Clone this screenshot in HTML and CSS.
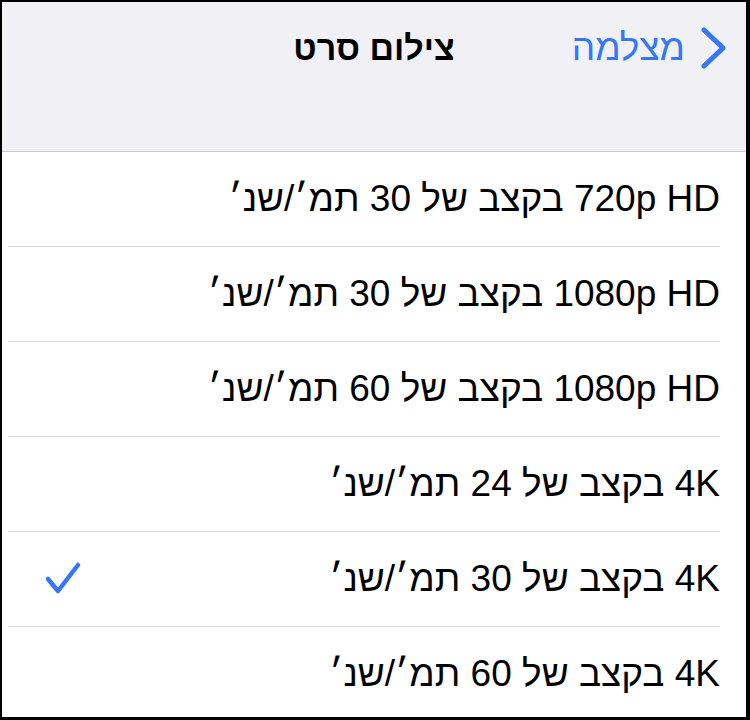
FILE: index.html
```html
<!DOCTYPE html>
<html lang="he" dir="rtl">
<head>
    <meta charset="UTF-8">
    <meta name="viewport" content="width=device-width, initial-scale=1.0">
    <title>צילום סרט</title>
    <link rel="stylesheet" href="styles.css">
</head>
<body>
    <div class="screen">
        <div class="nav-bar">
            <div class="nav-row">
                <a class="back-btn" href="#">
                    <svg class="chevron" viewBox="0 0 30 44" width="30" height="44">
                        <path d="M5 4 L24 22 L5 40" fill="none" stroke="#3478f6" stroke-width="5" stroke-linecap="round" stroke-linejoin="round"/>
                    </svg>
                    <span>מצלמה</span>
                </a>
                <h1 class="nav-title">צילום סרט</h1>
                <div></div>
            </div>
        </div>

        <ul class="options">
            <li class="option"><span>720p HD בקצב של 30 תמ׳/שנ׳</span></li>
            <li class="option"><span>1080p HD בקצב של 30 תמ׳/שנ׳</span></li>
            <li class="option"><span>1080p HD בקצב של 60 תמ׳/שנ׳</span></li>
            <li class="option"><span>4K בקצב של 24 תמ׳/שנ׳</span></li>
            <li class="option selected">
                <span>4K בקצב של 30 תמ׳/שנ׳</span>
                <svg class="check" viewBox="0 0 38 36" width="38" height="36">
                    <path d="M4 18 L14 30 L34 4" fill="none" stroke="#3478f6" stroke-width="4.5" stroke-linecap="round" stroke-linejoin="round"/>
                </svg>
            </li>
            <li class="option"><span>4K בקצב של 60 תמ׳/שנ׳</span></li>
        </ul>
    </div>
</body>
</html>
```

FILE: styles.css
```css
* {
    margin: 0;
    padding: 0;
    box-sizing: border-box;
}

body {
    font-family: 'Liberation Sans', Arial, sans-serif;
    background: #000;
}

.screen {
    width: 750px;
    height: 720px;
    border-style: solid;
    border-color: #000;
    border-width: 2px 4px 3px 2px;
    background: #fff;
    overflow: hidden;
}

.nav-bar {
    height: 150px;
    background: #f0f0f5;
    border-bottom: 1px solid #c9c9ce;
}

.nav-row {
    height: 92px;
    display: grid;
    grid-template-columns: 1fr auto 1fr;
    align-items: center;
}

.back-btn {
    display: flex;
    align-items: center;
    gap: 14px;
    padding-right: 17px;
    color: #3478f6;
    text-decoration: none;
    font-size: 37px;
}

.chevron {
    display: block;
}

.nav-title {
    font-size: 34px;
    font-weight: bold;
    color: #000;
}

.options {
    list-style: none;
}

.option {
    height: 95px;
    margin-right: 26px;
    margin-left: 6px;
    border-bottom: 1px solid #d9d9dd;
    display: flex;
    align-items: center;
    font-size: 37px;
    color: #000;
}

.check {
    display: block;
    margin-right: auto;
    margin-left: 36px;
}
```
